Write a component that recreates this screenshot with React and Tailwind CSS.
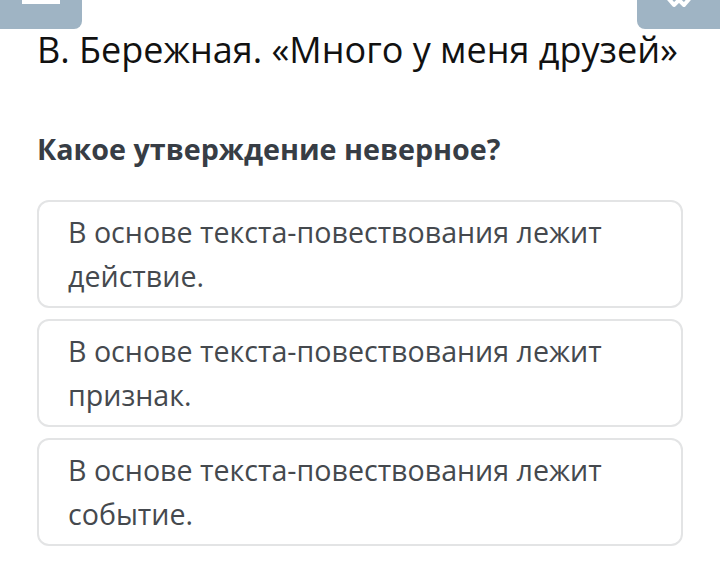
const options = [
  "действие.",
  "признак.",
  "событие.",
];

const App = () => {
  return (
    <div className="w-[720px] h-[569px] bg-white overflow-hidden relative" style={{ fontFamily: "'Open Sans', sans-serif" }}>
      {/* верхние кнопки */}
      <div className="flex justify-between h-[29px]">
        <div className="w-[82px] h-[29px] bg-[#9fb4c4] rounded-br-[8px] flex justify-center">
          <div className="w-[38px] h-[4px] bg-white"></div>
        </div>
        <div className="w-[83px] h-[29px] bg-[#9fb4c4] rounded-bl-[8px] flex justify-center">
          <svg width="28" height="8" viewBox="0 0 28 8" className="ml-[1px]">
            <path d="M3 -2 L9 5 L14 0 L19 5 L25 -2" stroke="white" strokeWidth="4" fill="none" strokeLinejoin="round" />
          </svg>
        </div>
      </div>

      <div className="px-[37px]">
        <h1 className="text-[36px] leading-[44px] text-[#111] mt-[-1px] whitespace-nowrap">
          В. Бережная. «Много у меня друзей»
        </h1>
        <h2 className="text-[28.7px] leading-[36px] font-bold text-[#373d45] mt-[59px]">
          Какое утверждение неверное?
        </h2>

        <div className="flex flex-col gap-[11px] mt-[33px]">
          {options.map((o) => (
            <div key={o} className="h-[108px] border-2 border-[#e3e4e5] rounded-[12px] pl-[29px] pt-[8px] text-[28.6px] leading-[44px] text-[#45494e]">
              В основе текста-повествования лежит
              <br />
              {o}
            </div>
          ))}
        </div>
      </div>
    </div>
  );
};

export default App;
